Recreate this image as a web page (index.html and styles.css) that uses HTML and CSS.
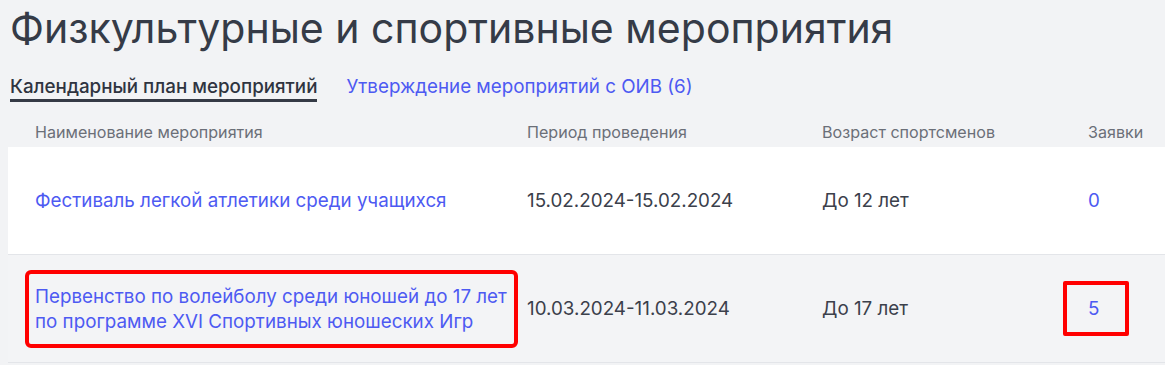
FILE: index.html
```html
<!DOCTYPE html>
<html lang="ru">
<head>
    <meta charset="UTF-8">
    <title>Физкультурные и спортивные мероприятия</title>
    <link rel="stylesheet" href="styles.css">
</head>
<body>

<h1 class="page-title">Физкультурные и спортивные мероприятия</h1>

<div class="tabs">
    <a class="tab active" href="#">Календарный план мероприятий</a>
    <a class="tab" href="#">Утверждение мероприятий с ОИВ (6)</a>
</div>

<div class="events">
    <div class="row head">
        <div>Наименование мероприятия</div>
        <div>Период проведения</div>
        <div>Возраст спортсменов</div>
        <div>Заявки</div>
    </div>

    <div class="row item">
        <div><a href="#">Фестиваль легкой атлетики среди учащихся</a></div>
        <div>15.02.2024-15.02.2024</div>
        <div>До 12 лет</div>
        <div><a href="#">0</a></div>
    </div>

    <div class="row item muted">
        <div class="marked-title"><a href="#">Первенство по волейболу среди юношей до 17 лет по программе XVI Спортивных юношеских Игр</a></div>
        <div>10.03.2024-11.03.2024</div>
        <div>До 17 лет</div>
        <div><a class="marked-count" href="#">5</a></div>
    </div>
</div>

</body>
</html>
```

FILE: styles.css
```css
* {
    margin: 0;
    padding: 0;
    box-sizing: border-box;
}

body {
    background: #f2f3f5;
    font-family: Inter, "Noto Sans", sans-serif;
    color: #3b404b;
    padding: 0 0 0 8px;
}

a {
    color: #4d5af2;
    text-decoration: none;
}

.page-title {
    font-size: 41px;
    font-weight: 400;
    color: #353b47;
    line-height: 56px;
    padding-left: 2px;
}

.tabs {
    display: flex;
    gap: 29px;
    margin-top: 20px;
    padding-left: 2px;
}

.tab {
    font-size: 18.8px;
    line-height: 22px;
    padding-bottom: 1px;
    border-bottom: 3px solid transparent;
}

.tab.active {
    color: #2f3440;
    font-weight: 500;
    border-bottom-color: #353a45;
}

.events {
    margin-top: 10px;
}

.row {
    display: grid;
    grid-template-columns: 480px 283px 254px 1fr;
    column-gap: 12px;
    align-items: center;
    padding-left: 27px;
}

.row.head {
    font-size: 16.1px;
    color: #6b6f78;
    height: 35px;
    padding-top: 4px;
}

.row.item {
    font-size: 18.8px;
    height: 108px;
    background: #fff;
    border-bottom: 1px solid #e3e5e9;
    line-height: 25px;
}

.row.item.muted {
    background: #f3f4f6;
}

.marked-title {
    outline: 4px solid #ff0000;
    border-radius: 2px;
    margin: 0 1px 0 -6px;
    padding: 10px 0 10px 6px;
}

.marked-count {
    display: inline-block;
    width: 66px;
    height: 55px;
    line-height: 47px;
    margin-left: -25px;
    padding-left: 21px;
    border: 4px solid #ff0000;
    border-radius: 2px;
}
```
